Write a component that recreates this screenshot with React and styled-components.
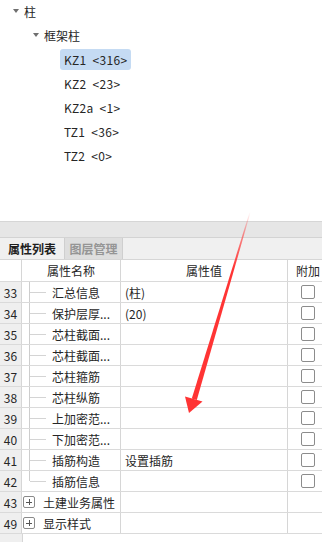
import React from "react";
import styled, { createGlobalStyle } from "styled-components";

const GlobalStyle = createGlobalStyle`
  html, body {
    margin: 0;
    padding: 0;
    background: #fff;
  }
  body {
    width: 322px;
    height: 542px;
    overflow: hidden;
    font-family: "Noto Sans CJK SC", "Noto Sans", sans-serif;
    font-size: 12px;
    color: #262626;
  }
`;

const Page = styled.div`
  position: relative;
  width: 322px;
  height: 542px;
  display: flex;
  flex-direction: column;
`;

const TreePanel = styled.div`
  height: 222px;
  border-bottom: 1px solid #d6d6d6;
  box-sizing: border-box;
  display: flex;
  flex-direction: column;
  padding-top: 0;
  & > :first-child {
    margin-top: -1px;
  }
`;

const TreeRow = styled.div`
  height: 24px;
  display: flex;
  align-items: center;
  padding-left: ${(p) => p.$indent}px;
  flex-shrink: 0;
`;

const Caret = styled.span`
  width: 0;
  height: 0;
  border-left: 3px solid transparent;
  border-right: 3px solid transparent;
  border-top: 4px solid #6f6f6f;
  margin-right: 5px;
`;

const TreeLabel = styled.span`
  display: inline-block;
  height: 21px;
  line-height: 21px;
  padding: 0 4px;
  border-radius: 3px;
  white-space: pre;
  word-spacing: 3px;
  letter-spacing: 0.3px;
  background: ${(p) => (p.$selected ? "#c5dbf3" : "transparent")};
`;

const Band = styled.div`
  height: 15px;
  background: #e6e6e6;
  border-bottom: 1px solid #d3d3d3;
`;

const TabBar = styled.div`
  height: 21px;
  background: #f0f0f0;
  border-bottom: 1px solid #d6d6d6;
  display: flex;
`;

const Tab = styled.div`
  width: ${(p) => p.$w}px;
  height: 21px;
  line-height: 21px;
  text-align: center;
  font-weight: 700;
  color: ${(p) => (p.$active ? "#1e1e1e" : "#959595")};
  background: ${(p) => (p.$active ? "#f0f0f0" : "#dedede")};
  border-left: ${(p) => (p.$active ? "none" : "1px solid #cfcfcf")};
  border-right: ${(p) => (p.$active ? "none" : "1px solid #cfcfcf")};
  box-sizing: border-box;
`;

const Table = styled.div`
  flex: 1;
  display: flex;
  flex-direction: column;
  background: linear-gradient(to right, #efefef 0, #efefef 22px, #d6d6d6 22px, #d6d6d6 23px, #fff 23px);
`;

const Row = styled.div`
  display: grid;
  grid-template-columns: 22px 99px 167px 1fr;
  height: ${(p) => (p.$header ? 22 : 21)}px;
  border-bottom: 1px solid #dadada;
  box-sizing: border-box;
  background: #fff;
`;

const NumCell = styled.div`
  background: ${(p) => (p.$header ? "#fff" : "#efefef")};
  border-right: 1px solid #d6d6d6;
  display: flex;
  align-items: center;
  justify-content: center;
`;

const Cell = styled.div`
  position: relative;
  border-right: ${(p) => (p.$last ? "none" : "1px solid #d6d6d6")};
  padding-left: ${(p) => p.$pad || 0}px;
  white-space: nowrap;
  overflow: hidden;
  display: flex;
  align-items: center;
  justify-content: ${(p) => (p.$center ? "center" : "flex-start")};
`;

const Branch = styled.span`
  position: absolute;
  left: 7px;
  top: 0;
  width: 16px;
  height: ${(p) => (p.$end ? "10px" : "100%")};
  border-left: 1px solid #cdcdcd;
  &::after {
    content: "";
    position: absolute;
    left: 0;
    top: 10px;
    width: 16px;
    border-top: 1px solid #d4d4d4;
  }
`;

const Name = styled.span`
  margin-left: 30px;
`;

const PlusBox = styled.span`
  width: 10px;
  height: 10px;
  border: 1px solid #8a8a8a;
  border-radius: 2px;
  margin-left: 1px;
  margin-right: 8px;
  position: relative;
  flex-shrink: 0;
  &::before {
    content: "";
    position: absolute;
    left: 2px;
    top: 4.5px;
    width: 6px;
    height: 1px;
    background: #555;
  }
  &::after {
    content: "";
    position: absolute;
    left: 4.5px;
    top: 2px;
    width: 1px;
    height: 6px;
    background: #555;
  }
`;

const Check = styled.span`
  width: 12px;
  height: 12px;
  border: 1px solid #8c8c8c;
  border-radius: 2px;
  background: #fff;
  margin-left: 13px;
`;

const Arrow = styled.svg`
  position: absolute;
  left: 0;
  top: 0;
  pointer-events: none;
`;

const treeItems = ["KZ1 <316>", "KZ2 <23>", "KZ2a <1>", "TZ1 <36>", "TZ2 <0>"];

const props = [
  { n: 33, name: "汇总信息", value: "(柱)" },
  { n: 34, name: "保护层厚...", value: "(20)" },
  { n: 35, name: "芯柱截面...", value: "" },
  { n: 36, name: "芯柱截面...", value: "" },
  { n: 37, name: "芯柱箍筋", value: "" },
  { n: 38, name: "芯柱纵筋", value: "" },
  { n: 39, name: "上加密范...", value: "" },
  { n: 40, name: "下加密范...", value: "" },
  { n: 41, name: "插筋构造", value: "设置插筋" },
  { n: 42, name: "插筋信息", value: "", end: true },
];

const groups = [
  { n: 43, name: "土建业务属性" },
  { n: 49, name: "显示样式" },
];

export default function App() {
  return (
    <Page>
      <GlobalStyle />
      <TreePanel>
        <TreeRow $indent={13}>
          <Caret />
          <span>柱</span>
        </TreeRow>
        <TreeRow $indent={33}>
          <Caret />
          <span>框架柱</span>
        </TreeRow>
        {treeItems.map((t, i) => (
          <TreeRow key={t} $indent={60}>
            <TreeLabel $selected={i === 0}>{t}</TreeLabel>
          </TreeRow>
        ))}
      </TreePanel>
      <Band />
      <TabBar>
        <Tab $w={64} $active>
          属性列表
        </Tab>
        <Tab $w={59}>图层管理</Tab>
      </TabBar>
      <Table>
        <Row $header>
          <NumCell $header />
          <Cell $center>属性名称</Cell>
          <Cell $center>属性值</Cell>
          <Cell $last $pad={8}>附加</Cell>
        </Row>
        {props.map((p) => (
          <Row key={p.n}>
            <NumCell>{p.n}</NumCell>
            <Cell>
              <Branch $end={p.end} />
              <Name>{p.name}</Name>
            </Cell>
            <Cell $pad={4}>{p.value}</Cell>
            <Cell $last>
              <Check />
            </Cell>
          </Row>
        ))}
        {groups.map((g) => (
          <Row key={g.n}>
            <NumCell>{g.n}</NumCell>
            <Cell>
              <PlusBox />
              <span>{g.name}</span>
            </Cell>
            <Cell />
            <Cell $last />
          </Row>
        ))}
      </Table>
      <Arrow width="322" height="542" viewBox="0 0 322 542">
        <defs>
          <linearGradient
            id="shaft"
            gradientUnits="userSpaceOnUse"
            x1="250"
            y1="212"
            x2="193"
            y2="400"
          >
            <stop offset="0" stopColor="#ff3434" stopOpacity="0" />
            <stop offset="0.12" stopColor="#ff3434" stopOpacity="0.55" />
            <stop offset="0.3" stopColor="#ff3434" stopOpacity="1" />
            <stop offset="1" stopColor="#ff3434" stopOpacity="1" />
          </linearGradient>
        </defs>
        <polygon
          points="249.6,212 250.6,212 196.8,400 191.8,398.6"
          fill="url(#shaft)"
        />
        <polygon points="189,413 185,396.5 202.5,401.5" fill="#ff3434" />
      </Arrow>
    </Page>
  );
}
